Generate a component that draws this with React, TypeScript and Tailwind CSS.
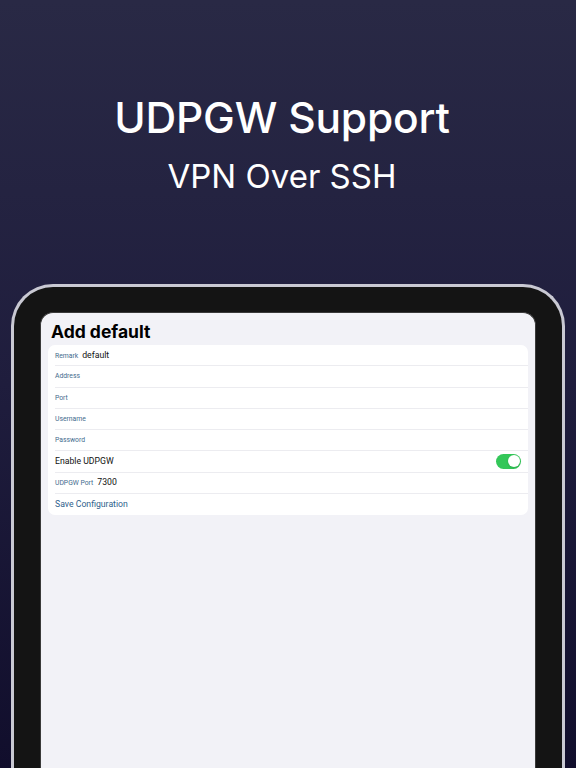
import React from "react";

function Row({ children, last }: { children: React.ReactNode; last?: boolean }) {
  return (
    <div className="pl-[7px]">
      <div className={`h-[21.25px] flex items-center pr-[6px] ${last ? "" : "border-b border-[#ececf0]"}`}>
        {children}
      </div>
    </div>
  );
}

function Field({ label, value }: { label: string; value?: string }) {
  return (
    <div className="flex items-baseline gap-[4px]">
      <span className="text-[6.8px] text-[#3f6b8d]">{label}</span>
      {value && <span className="text-[8.7px] text-[#111]">{value}</span>}
    </div>
  );
}

export default function App() {
  return (
    <div
      className="w-[576px] h-[768px] overflow-hidden flex flex-col items-center bg-gradient-to-b from-[#292945] via-[#1f1d3d] to-[#110e2c]"
      style={{ fontFamily: "Inter, 'Noto Sans', sans-serif" }}
    >
      <div className="pt-[89px] pr-[12px] flex flex-col items-center text-white">
        <h1 className="text-[42.5px] leading-[58px] font-medium tracking-[-0.2px]">UDPGW Support</h1>
        <p className="text-[33px] leading-[40px] font-normal mt-[9px]">VPN Over SSH</p>
      </div>
      <div className="mt-[88px] w-[554px] flex-1 rounded-t-[42px] border-[3px] border-b-0 border-[#c9c9d3] bg-[#141414] pt-[25px] px-[26px] flex">
        <div className="flex-1 rounded-t-[13px] bg-[#f2f2f7] border border-b-0 border-[#3a3a3a] px-[7px] pt-[7px]">
          <div className="text-[17.5px] leading-[24px] font-bold text-black pl-[3px]">Add default</div>
          <div className="mt-[1px] bg-white rounded-[7px] overflow-hidden" style={{ fontFamily: "Roboto, 'Noto Sans', sans-serif" }}>
            <Row><Field label="Remark" value="default" /></Row>
            <Row><Field label="Address" /></Row>
            <Row><Field label="Port" /></Row>
            <Row><Field label="Username" /></Row>
            <Row><Field label="Password" /></Row>
            <Row>
              <div className="flex-1 flex items-center justify-between">
                <span className="text-[8.7px] text-[#111]">Enable UDPGW</span>
                <div className="w-[25px] h-[15px] rounded-full bg-[#34c759] p-[1.5px] flex justify-end mr-[1px]">
                  <div className="w-[12px] h-[12px] rounded-full bg-white shadow-sm" />
                </div>
              </div>
            </Row>
            <Row><Field label="UDPGW Port" value="7300" /></Row>
            <Row last>
              <span className="text-[8.7px] text-[#2f5f8c]">Save Configuration</span>
            </Row>
          </div>
        </div>
      </div>
    </div>
  );
}
